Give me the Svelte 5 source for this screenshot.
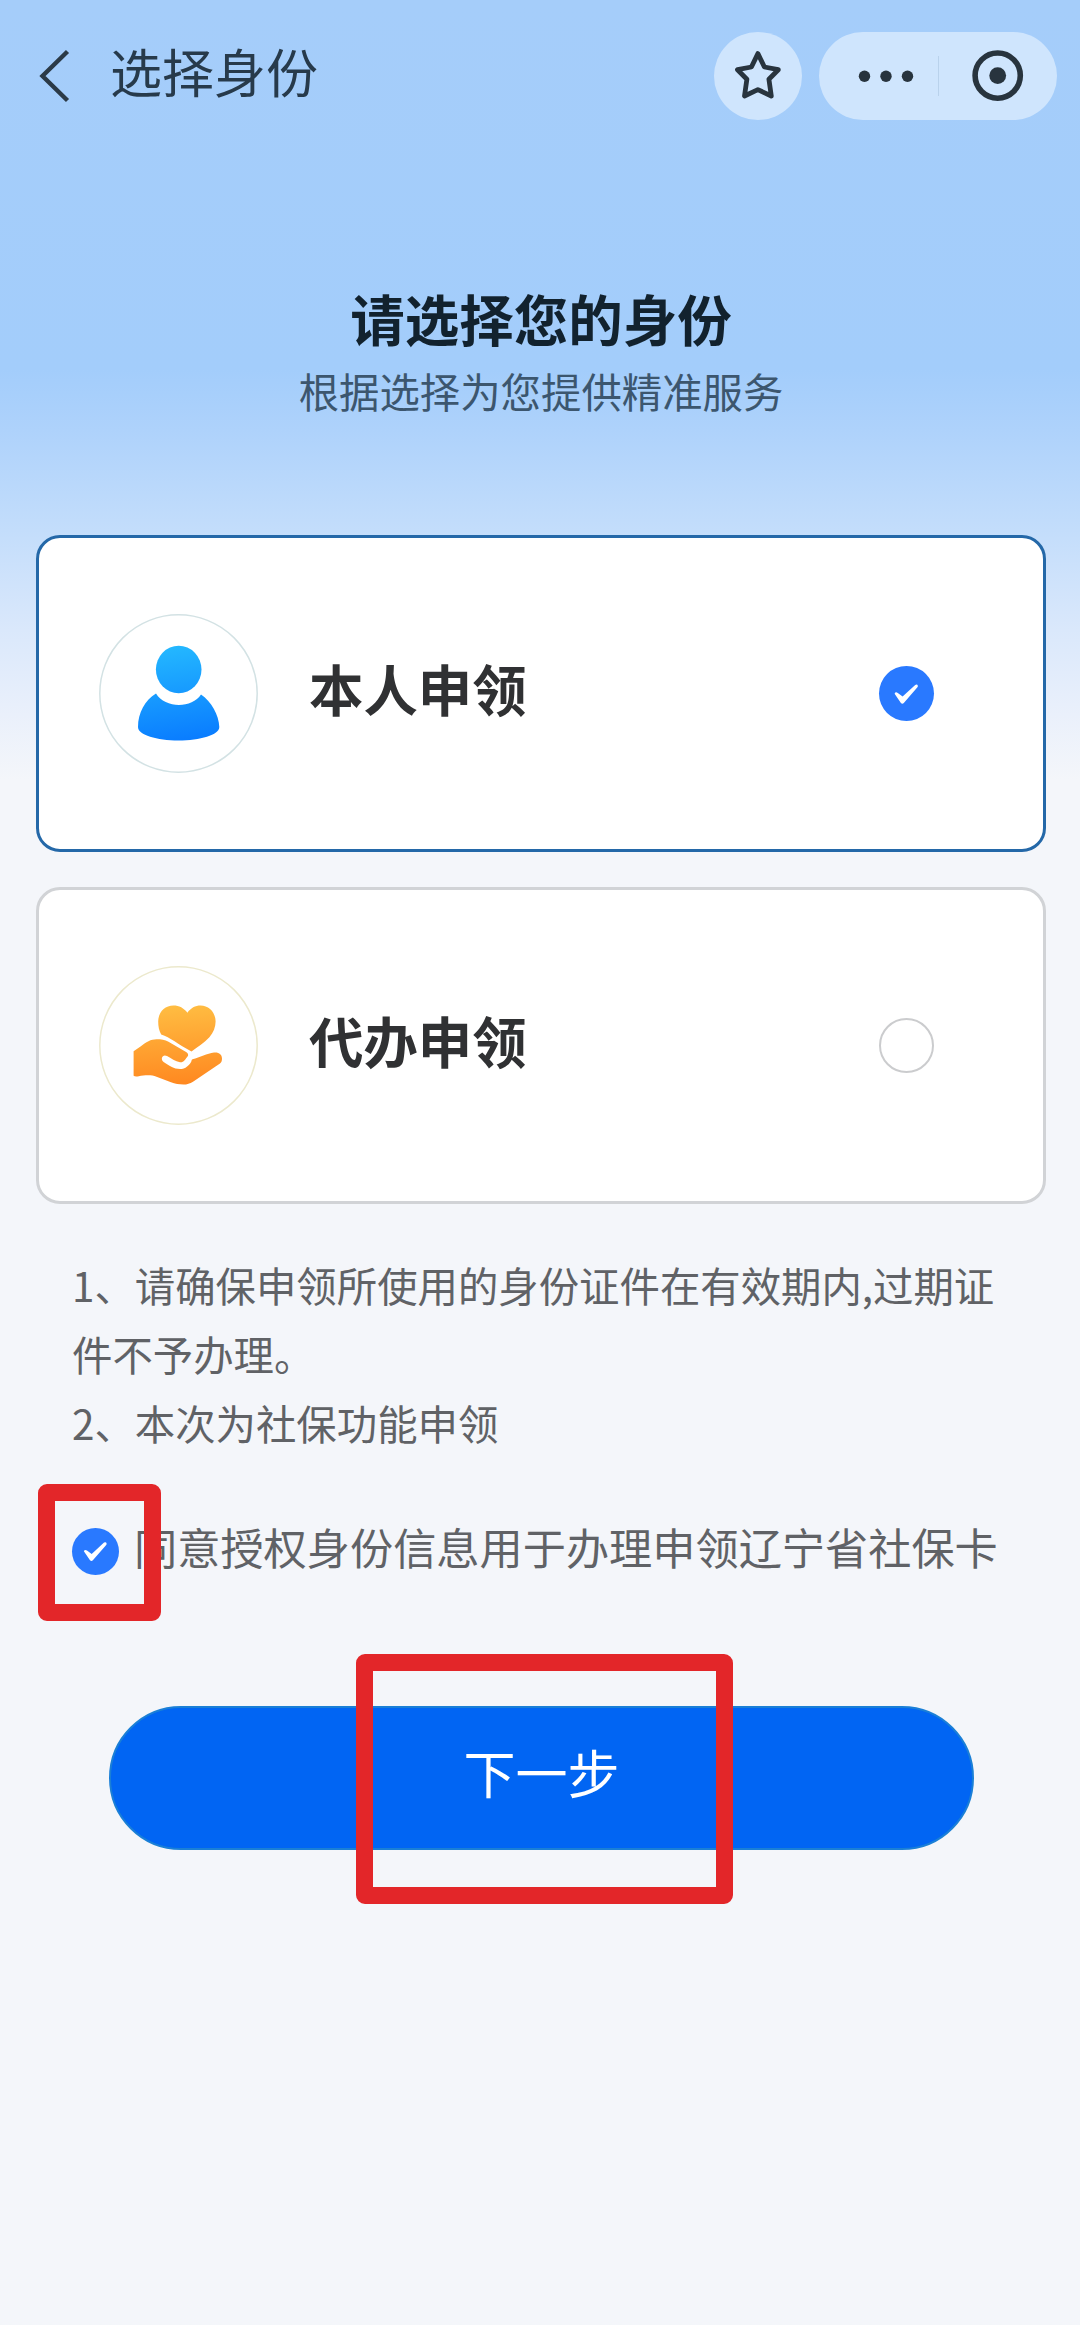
<script>
  const options = [
    { id: 'self', label: '本人申领' },
    { id: 'agent', label: '代办申领' },
  ];

  const notes = [
    '1、请确保申领所使用的身份证件在有效期内,过期证件不予办理。',
    '2、本次为社保功能申领',
  ];

  let selected = $state('self');
  let agreed = $state(true);
</script>

{#snippet tick(box)}
  <svg class="tick" viewBox={box}>
    <path d="M15.6 27.8 Q16.5 25.4 18.8 27 L23.6 30.6 L36.2 18.9 Q38.4 17.9 38.9 20 Q38.9 20.8 38.2 21.6 L24.8 37 Q23.3 38.3 21.9 36.9 Z" />
  </svg>
{/snippet}

<div class="page">
  <header>
    <button class="back" aria-label="返回">
      <svg width="34" height="56" viewBox="0 0 34 56">
        <path d="M31.5 3.5 L6.5 28 L31.5 52.5" />
      </svg>
    </button>
    <h1>选择身份</h1>
    <button class="star" aria-label="收藏">
      <svg width="88" height="88" viewBox="0 0 88 88">
        <path d="M43.9 21.6 L50.4 35 L64.3 37.7 L54.9 47.2 L57.3 64 L43.9 57.6 L30.5 64 L32.9 47.2 L23.500 37.700 L37.4 35 Z" />
      </svg>
    </button>
    <div class="capsule">
      <svg width="238" height="88" viewBox="0 0 238 88">
        <circle cx="45.5" cy="44.3" r="5.7" />
        <circle cx="67" cy="44.3" r="5.7" />
        <circle cx="88.5" cy="44.3" r="5.7" />
        <rect x="119" y="24" width="1" height="40" fill="#b9d2ec" />
        <circle cx="178.7" cy="43.6" r="22.6" fill="none" stroke="#28343e" stroke-width="5.6" />
        <circle cx="178.7" cy="43.6" r="8.4" />
      </svg>
    </div>
  </header>

  <section class="intro">
    <h2>请选择您的身份</h2>
    <p>根据选择为您提供精准服务</p>
  </section>

  <div class="cards">
    {#each options as option}
      <button
        class="card"
        class:active={selected === option.id}
        onclick={() => (selected = option.id)}
      >
        <svg class="avatar" viewBox="0 0 159 159">
          <defs>
            <linearGradient id="blue" gradientUnits="userSpaceOnUse" x1="70" y1="32" x2="84" y2="126">
              <stop offset="0" stop-color="#24b8ff" />
              <stop offset="1" stop-color="#0a7dff" />
            </linearGradient>
            <linearGradient id="orange" gradientUnits="userSpaceOnUse" x1="76" y1="39" x2="82" y2="119">
              <stop offset="0" stop-color="#ffbd42" />
              <stop offset="1" stop-color="#ff8820" />
            </linearGradient>
          </defs>
          {#if option.id === 'self'}
            <circle cx="79.5" cy="79.5" r="78.7" fill="#fff" stroke="#d3e2e4" stroke-width="1.5" />
            <ellipse cx="79.7" cy="55.5" rx="22.8" ry="23.8" fill="url(#blue)" />
            <path fill="url(#blue)" d="M57 79.5 C66 94.5 93 94.5 102 80.5 C112 87 120 101 120.3 113 C120.3 121 101 126.5 79.5 126.5 C58 126.5 39 121 39 113 C39 99 46 86 57 79.5 Z" />
          {:else}
            <circle cx="79.5" cy="79.5" r="78.7" fill="#fff" stroke="#ece9cd" stroke-width="1.5" />
            <path fill="url(#orange)" d="M88.4 46.8 C85 42 80 39.5 74.5 39.5 C65.5 39.5 59.2 46.5 59.2 55.5 C59.2 60.5 60 64.5 62.2 68.5 C71 71 79 78.5 92.5 85.5 C99 80.5 105 77 110.4 71.2 C114.5 66.5 116.6 61 116.6 55.5 C116.6 46.5 110 39.5 101.5 39.5 C96.5 39.5 91.5 42 88.4 46.8 Z" />
            <path fill="url(#orange)" d="M34.6 85.2 L41.5 80.5 C47 76 52 73.2 57.5 73.2 C62 73.2 66 73.7 69.5 75.7 L87.5 86.3 C89.8 88 89.5 90 88 91.2 C86 93.5 85 96.5 81 96.2 C76.5 95.5 72 92.2 68 90 C63.5 87.8 61 93 64.6 96 C69 98.8 72 101.3 76.5 102.5 C80 103.2 84 103.3 86.5 101.7 C89.5 99.5 90.5 98.5 92.1 96 C92.7 94.8 92.3 93.8 93.5 93.2 C101 91.5 108 87.3 115 86.5 C120 86 123 88.5 123 92.5 C123 94.8 122.5 96.3 121 97.5 L94 115.7 C91 117.6 88 118.5 84.5 118.5 C80 118.5 76 117.7 72 116.3 L57.5 110.7 C52 108.5 45 109.3 39.8 110.3 Q36 111 34.6 109.8 Z" />
          {/if}
        </svg>
        <span class="label">{option.label}</span>
        <span class="radio" class:on={selected === option.id}>
          {#if selected === option.id}
            {@render tick('0 0 55 55')}
          {/if}
        </span>
      </button>
    {/each}
  </div>

  <div class="notes">
    {#each notes as note}
      <p>{note}</p>
    {/each}
  </div>

  <div class="agree">
    <button class="radio small" class:on={agreed} aria-label="同意" onclick={() => (agreed = !agreed)}>
      {#if agreed}
        {@render tick('3.5 4 48 48')}
      {/if}
    </button>
    <span>同意授权身份信息用于办理申领辽宁省社保卡</span>
    <div class="mark mark-agree"></div>
  </div>

  <div class="submit">
    <button class="next">下一步</button>
    <div class="mark mark-next"></div>
  </div>
</div>

<style>
  :global(body) {
    background: #f4f6fa;
  }

  .page {
    box-sizing: border-box;
    width: 1080px;
    height: 2325px;
    overflow: hidden;
    font-family: 'Noto Sans CJK SC', 'Noto Sans', sans-serif;
    background: linear-gradient(
      180deg,
      #a5cdfa 0,
      #a3cdfb 370px,
      #aed2fb 430px,
      #c3ddfb 530px,
      #dae8fb 630px,
      #eaf0fb 715px,
      #f4f6fa 780px
    );
  }

  h1,
  h2,
  p {
    margin: 0;
    font-weight: 400;
  }

  button {
    padding: 0;
    border: 0;
    background: none;
    font-family: inherit;
    cursor: pointer;
  }

  svg {
    display: block;
  }

  header {
    display: flex;
    align-items: center;
    height: 152px;
    padding: 0 23px 0 36px;
  }

  .back path {
    fill: none;
    stroke: #2b3a47;
    stroke-width: 4.4;
  }

  h1 {
    flex: 1;
    margin-left: 40px;
    padding-bottom: 10px;
    font-size: 52px;
    line-height: 64px;
    color: #273a4b;
  }

  .star {
    width: 88px;
    height: 88px;
    margin-right: 17px;
    border-radius: 50%;
    background: #cfe5fd;
  }

  .star path {
    fill: none;
    stroke: #28343e;
    stroke-width: 4.8;
    stroke-linejoin: round;
  }

  .capsule {
    width: 238px;
    height: 88px;
    border-radius: 44px;
    background: #cfe5fd;
    fill: #28343e;
  }

  .intro {
    height: 383px;
    box-sizing: border-box;
    padding-top: 130px;
    padding-left: 2px;
    text-align: center;
  }

  h2 {
    font-size: 54.5px;
    line-height: 72px;
    font-weight: 700;
    color: #12222e;
  }

  .intro p {
    margin-top: 9px;
    font-size: 40.4px;
    line-height: 56px;
    color: #3c566e;
  }

  .cards {
    display: flex;
    flex-direction: column;
    gap: 35px;
    padding: 0 34px 0 36px;
  }

  .card {
    display: flex;
    align-items: center;
    box-sizing: border-box;
    height: 317px;
    padding: 0 109px 0 60px;
    border: 3px solid #d1d3d6;
    border-radius: 24px;
    background: #fff;
  }

  .card.active {
    border-color: #2468a8;
  }

  .avatar {
    width: 159px;
    height: 159px;
  }

  .label {
    flex: 1;
    margin-left: 51px;
    padding-bottom: 12px;
    font-size: 54.4px;
    line-height: 72px;
    font-weight: 700;
    text-align: left;
    color: #303133;
  }

  .radio {
    box-sizing: border-box;
    width: 55px;
    height: 55px;
    border: 2px solid #cbccce;
    border-radius: 50%;
    background: #fff;
  }

  .radio.on {
    border: 0;
    background: #2979ff;
  }

  .radio.small {
    width: 47px;
    height: 47px;
  }

  .tick {
    width: 100%;
    height: 100%;
    fill: #fff;
  }

  .notes {
    margin-top: 46px;
    padding: 0 72px;
    font-size: 40.4px;
    line-height: 69px;
    color: #606266;
  }

  .agree {
    position: relative;
    display: flex;
    align-items: center;
    height: 64px;
    margin-top: 62px;
    padding-left: 72px;
    font-size: 43.2px;
    color: #606266;
  }

  .agree span {
    margin-left: 15px;
    padding-bottom: 11px;
    line-height: 64px;
    white-space: nowrap;
  }

  .submit {
    position: relative;
    margin-top: 123px;
    padding: 0 106px 0 109px;
  }

  .next {
    box-sizing: border-box;
    width: 100%;
    height: 144px;
    padding-bottom: 14px;
    border: 2px solid #1a7fd6;
    border-radius: 72px;
    background: #0165f3;
    font-size: 52px;
    color: #fff;
  }

  /* red annotation frames over the page */
  .mark {
    position: absolute;
    box-sizing: border-box;
    border: 17px solid #e32629;
    border-radius: 9px;
    pointer-events: none;
  }

  .mark-agree {
    top: -35px;
    left: 38px;
    width: 123px;
    height: 137px;
  }

  .mark-next {
    top: -52px;
    left: 356px;
    width: 377px;
    height: 250px;
  }
</style>
